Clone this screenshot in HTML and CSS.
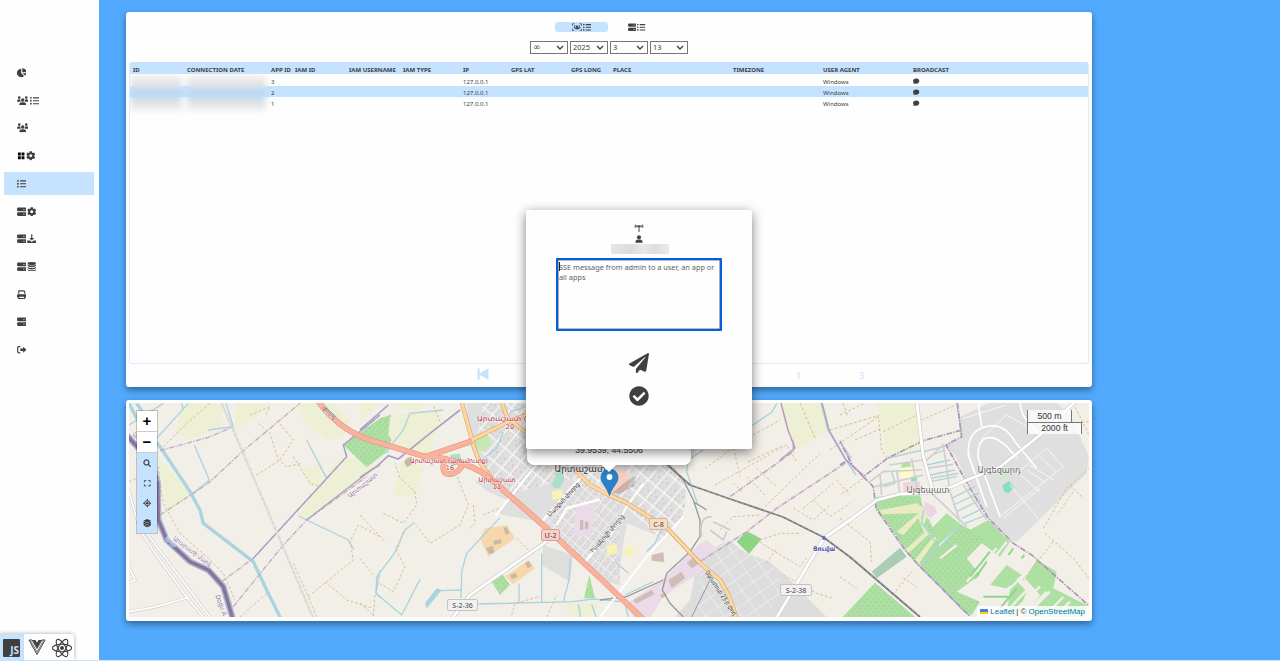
FILE: index.html
```html
<!DOCTYPE html>
<html lang="en">
<head>
<meta charset="utf-8">
<title>Admin</title>
<link rel="stylesheet" href="styles.css">
</head>
<body>
<svg class="defs" width="0" height="0">
  <symbol id="list" viewBox="0 0 512 512"><path d="M48 48a48 48 0 1 0 48 48 48 48 0 0 0-48-48zm0 160a48 48 0 1 0 48 48 48 48 0 0 0-48-48zm0 160a48 48 0 1 0 48 48 48 48 0 0 0-48-48zm448 16H176a16 16 0 0 0-16 16v32a16 16 0 0 0 16 16h320a16 16 0 0 0 16-16v-32a16 16 0 0 0-16-16zm0-320H176a16 16 0 0 0-16 16v32a16 16 0 0 0 16 16h320a16 16 0 0 0 16-16V80a16 16 0 0 0-16-16zm0 160H176a16 16 0 0 0-16 16v32a16 16 0 0 0 16 16h320a16 16 0 0 0 16-16v-32a16 16 0 0 0-16-16z"/></symbol>
  <symbol id="gear" viewBox="0 0 512 512"><path d="M487.4 315.7l-42.6-24.6c4.3-23.2 4.3-47 0-70.2l42.6-24.6c4.9-2.8 7.1-8.6 5.5-14-11.1-35.6-30-67.8-54.7-94.6-3.8-4.1-10-5.1-14.8-2.3L380.8 110c-17.9-15.4-38.5-27.3-60.8-35.1V25.8c0-5.6-3.9-10.5-9.4-11.7-36.7-8.2-74.3-7.8-109.2 0-5.5 1.2-9.4 6.1-9.4 11.7V75c-22.2 7.9-42.8 19.8-60.8 35.1L88.7 85.5c-4.9-2.8-11-1.9-14.8 2.3-24.7 26.7-43.6 58.9-54.7 94.6-1.7 5.4.6 11.2 5.5 14L67.3 221c-4.3 23.2-4.3 47 0 70.2l-42.6 24.6c-4.9 2.8-7.1 8.6-5.5 14 11.1 35.6 30 67.8 54.7 94.6 3.8 4.1 10 5.1 14.8 2.3l42.6-24.6c17.9 15.4 38.5 27.3 60.8 35.1v49.2c0 5.6 3.9 10.5 9.4 11.7 36.7 8.2 74.3 7.8 109.2 0 5.5-1.2 9.4-6.1 9.4-11.7v-49.2c22.2-7.9 42.8-19.8 60.8-35.1l42.6 24.6c4.9 2.8 11 1.9 14.8-2.3 24.7-26.7 43.6-58.9 54.7-94.6 1.5-5.5-.7-11.3-5.6-14.1zM256 336c-44.1 0-80-35.9-80-80s35.9-80 80-80 80 35.9 80 80-35.9 80-80 80z"/></symbol>
  <symbol id="server" viewBox="0 0 512 512"><path fill-rule="evenodd" d="M64 32h384a60 60 0 0 1 60 60v80a60 60 0 0 1-60 60H64A60 60 0 0 1 4 172V92a60 60 0 0 1 60-60zm270 78v44h36v-44zm72 0v44h36v-44zM64 280h384a60 60 0 0 1 60 60v80a60 60 0 0 1-60 60H64A60 60 0 0 1 4 420v-80a60 60 0 0 1 60-60zm270 78v44h36v-44zm72 0v44h36v-44z"/></symbol>
  <symbol id="pie" viewBox="0 0 512 512"><path d="M225 40v232l155 155A226 226 0 1 1 225 40zM282 8a226 226 0 0 1 222 222H282zM300 280h208a220 220 0 0 1-62 140z"/></symbol>
  <symbol id="users" viewBox="0 0 640 512"><circle cx="125" cy="80" r="72"/><circle cx="515" cy="80" r="72"/><circle cx="320" cy="210" r="98"/><path d="M0 290c0-75 45-115 110-115 35 0 62 10 82 26-10 50 8 88 35 112H20c-12 0-20-10-20-23zM640 290c0-75-45-115-110-115-35 0-62 10-82 26 10 50-8 88-35 112h207c12 0 20-10 20-23zM128 485c0-85 50-150 132-150h120c82 0 132 65 132 150 0 15-10 27-27 27H155c-17 0-27-12-27-27z"/></symbol>
  <symbol id="grid" viewBox="0 0 512 512"><path d="M50 80h155v160H50zM245 80h155v160H245zM50 280h155v160H50zM245 280h155v160H245z"/></symbol>
  <symbol id="download" viewBox="0 0 512 512"><path d="M224 20h64v190h100L256 350 124 210h100zM10 350h150l96 80 96-80h150v140H10z"/></symbol>
  <symbol id="db" viewBox="0 0 512 512"><ellipse cx="256" cy="85" rx="225" ry="80"/><path d="M31 130c80 75 370 75 450 0v75c-30 100-420 100-450 0zM31 265c80 75 370 75 450 0v60c-30 100-420 100-450 0zM31 385c80 75 370 75 450 0v45c-30 100-420 100-450 0z"/></symbol>
  <symbol id="print" viewBox="0 0 512 512"><path fill-rule="evenodd" d="M64 200V60q0-45 45-45h275l64 64v121h-60V105l-30-30H124v125zM55 225h402q55 0 55 55v130h-64v-70H64v70H0V280q0-55 55-55zM64 340h384v155H64zm60 30v65h264v-65z"/></symbol>
  <symbol id="exit" viewBox="0 0 512 512"><path d="M180 60v62H110q-42 0-42 42v184q0 42 42 42h70v62H100Q5 452 5 357V155q0-95 95-95zM330 100l180 156-180 156v-95H180V195h150z"/></symbol>
  <symbol id="bubble" viewBox="0 0 512 512"><path d="M256 32c142 0 252 90 252 205S398 445 256 445c-40 0-75-7-108-20C110 460 60 480 8 480c30-35 50-70 55-110C25 335 4 290 4 237 4 122 114 32 256 32z"/></symbol>
  <symbol id="person" viewBox="0 0 512 512"><circle cx="256" cy="140" r="130"/><path d="M20 500c0-130 70-210 170-210h132c100 0 170 80 170 210z"/></symbol>
  <symbol id="tower" viewBox="0 0 20 16"><path d="M2.500 1v7M6 2.500v4M17.500 1v7M14 2.500v4M3 4.500h14" fill="none" stroke="currentColor" stroke-width="1.700"/><circle cx="10" cy="4.500" r="2.200"/><path d="M9 4.500h2V16H9z"/></symbol>
  <symbol id="plane" viewBox="0 0 512 512"><path d="M476 3.200L12.500 270.600c-18.100 10.400-15.800 35.600 2.200 43.200L121 358.400l287.300-253.200c5.500-4.900 13.300 2.600 8.600 8.300L176 407v80.500c0 23.600 28.500 32.900 42.500 15.800L282 426l124.600 52.200c14.200 6 30.400-2.900 33-18.200l72-432C515 7.800 493.300-6.800 476 3.200z"/></symbol>
  <symbol id="check" viewBox="0 0 512 512"><path d="M504 256c0 136.967-111.033 248-248 248S8 392.967 8 256 119.033 8 256 8s248 111.033 248 248zM227.314 387.314l184-184c6.248-6.248 6.248-16.379 0-22.627l-22.627-22.627c-6.248-6.249-16.379-6.249-22.628 0L216 308.118l-70.059-70.059c-6.248-6.248-16.379-6.248-22.628 0l-22.627 22.627c-6.248 6.248-6.248 16.379 0 22.627l104 104c6.249 6.249 16.379 6.249 22.628.001z"/></symbol>
  <symbol id="scan" viewBox="0 0 20 16"><path d="M1 5V1h4M15 1h4v4M19 11v4h-4M5 15H1v-4" fill="none" stroke="currentColor" stroke-width="1.500"/><circle cx="10" cy="7" r="2.600"/><circle cx="5.300" cy="5.500" r="1.500"/><circle cx="14.700" cy="5.500" r="1.500"/><path d="M3 10q0-3 3-3l1 2.500h6l1-2.500q3 0 3 3h-2.500q.5 2-.5 2H7q-1 0-.5-2z"/></symbol>
  <symbol id="search" viewBox="0 0 16 16"><path d="M6.500 1.800a4.700 4.700 0 1 0 .01 0zM10 10l4.500 4.500" fill="none" stroke="currentColor" stroke-width="2.300"/></symbol>
  <symbol id="full" viewBox="0 0 16 16"><path d="M2.500 6V3h3.500M10 3h3.500v3M13.500 10v3H10M6 13H2.500v-3" fill="none" stroke="currentColor" stroke-width="1.700"/></symbol>
  <symbol id="target" viewBox="0 0 16 16"><circle cx="8" cy="8" r="4.900" fill="none" stroke="currentColor" stroke-width="1.700"/><circle cx="8" cy="8" r="2.500"/><path d="M7 0h2v4H7zM7 12h2v4H7zM0 7h4v2H0zM12 7h4v2h-4z"/></symbol>
  <symbol id="layers" viewBox="0 0 16 16"><path d="M8 0l7.500 3.500L8 7 .5 3.500zM.5 5.700L3 5.300l5 2.500 5-2.500 2.500.4v1.500L8 10.500.5 7.200zM.5 9L3 8.600l5 2.500 5-2.500 2.500.4v1.500L8 13.800.5 10.500zM.5 12l2-.3L8 14l5.500-2.300 2 .3L8 16z"/></symbol>
</svg>

<div class="page">
  <aside class="sidebar">
    <nav class="menu">
      <a class="item"><svg class="ic"><use href="#pie"/></svg></a>
      <a class="item"><svg class="ic wide"><use href="#users"/></svg><svg class="ic spaced"><use href="#list"/></svg></a>
      <a class="item"><svg class="ic wide"><use href="#users"/></svg></a>
      <a class="item"><svg class="ic black"><use href="#grid"/></svg><svg class="ic"><use href="#gear"/></svg></a>
      <a class="item active"><svg class="ic"><use href="#list"/></svg></a>
      <a class="item pair"><svg class="ic"><use href="#server"/></svg><svg class="ic"><use href="#gear"/></svg></a>
      <a class="item pair"><svg class="ic"><use href="#server"/></svg><svg class="ic"><use href="#download"/></svg></a>
      <a class="item pair"><svg class="ic"><use href="#server"/></svg><svg class="ic"><use href="#db"/></svg></a>
      <a class="item"><svg class="ic"><use href="#print"/></svg></a>
      <a class="item"><svg class="ic"><use href="#server"/></svg></a>
      <a class="item"><svg class="ic"><use href="#exit"/></svg></a>
    </nav>
    <div class="frameworks">
      <div class="fw on"><span class="js">JS</span></div>
      <div class="fw"><svg width="18" height="17" viewBox="0 0 18 17"><path d="M1 1l8 14.500L17 1h-3.200L9 9.500 4.200 1z" fill="none" stroke="#404040" stroke-width="1"/><path d="M4.500 1h3L9 3.800 10.500 1h3L9 9z" fill="#404040"/><path d="M2.500 1.500L9 13l6.500-11.500" fill="none" stroke="#404040" stroke-width=".7"/></svg></div>
      <div class="fw"><svg width="22" height="20" viewBox="-11 -10 22 20"><g fill="none" stroke="#404040" stroke-width="1.100"><ellipse rx="9.700" ry="3.700"/><ellipse rx="9.700" ry="3.700" transform="rotate(60)"/><ellipse rx="9.700" ry="3.700" transform="rotate(120)"/></g><circle r="2" fill="#404040"/></svg></div>
    </div>
  </aside>

  <main class="main">
    <section class="panel log">
      <div class="tabs">
        <div class="tab on"><svg class="ic scan"><use href="#scan"/></svg><svg class="ic"><use href="#list"/></svg></div>
        <div class="tab"><svg class="ic"><use href="#server"/></svg><svg class="ic"><use href="#list"/></svg></div>
      </div>
      <div class="filters">
        <div class="select"><span class="inf">∞</span><svg viewBox="0 0 8 5"><path d="M1 1l3 3 3-3"/></svg></div>
        <div class="select"><span>2025</span><svg viewBox="0 0 8 5"><path d="M1 1l3 3 3-3"/></svg></div>
        <div class="select"><span>3</span><svg viewBox="0 0 8 5"><path d="M1 1l3 3 3-3"/></svg></div>
        <div class="select"><span>13</span><svg viewBox="0 0 8 5"><path d="M1 1l3 3 3-3"/></svg></div>
      </div>
      <div class="table">
        <div class="row head"><span>ID</span><span>CONNECTION DATE</span><span>APP ID</span><span>IAM ID</span><span>IAM USERNAME</span><span>IAM TYPE</span><span>IP</span><span>GPS LAT</span><span>GPS LONG</span><span>PLACE</span><span>TIMEZONE</span><span>USER AGENT</span><span>BROADCAST</span></div>
        <div class="row"><span></span><span></span><span>3</span><span></span><span></span><span></span><span>127.0.0.1</span><span></span><span></span><span></span><span></span><span>Windows</span><span><svg class="chat"><use href="#bubble"/></svg></span></div>
        <div class="row sel"><span></span><span></span><span>2</span><span></span><span></span><span></span><span>127.0.0.1</span><span></span><span></span><span></span><span></span><span>Windows</span><span><svg class="chat"><use href="#bubble"/></svg></span></div>
        <div class="row"><span></span><span></span><span>1</span><span></span><span></span><span></span><span>127.0.0.1</span><span></span><span></span><span></span><span></span><span>Windows</span><span><svg class="chat"><use href="#bubble"/></svg></span></div>
        <div class="redacted"><i></i><i></i></div>
      </div>
      <div class="pager">
        <svg width="12" height="12" viewBox="0 0 12 12"><path d="M.5.500h2.200v4.700L11.500.3v11.400L2.700 6.800v4.700H.5z"/></svg>
        <span class="cur">1</span><span>3</span>
      </div>
    </section>

    <section class="panel geo">
      <div class="map">
        <svg class="tiles" viewBox="129 403 960 214" width="960" height="214">
          <defs>
            <pattern id="streets" width="36" height="20" patternUnits="userSpaceOnUse" patternTransform="rotate(-50)"><path d="M0 0H36M0 0V20" stroke="#f4f4f4" stroke-width="4"/><path d="M4 5h4v3H4zM14 4h3v4H14zM9 13h4v3H9zM22 12h3v3H22zM28 5h4v3H28z" fill="#c8bbb1"/></pattern>
            <pattern id="blocks" width="52" height="31" patternUnits="userSpaceOnUse" patternTransform="rotate(-50)"><path d="M0 0H52M0 0V31" stroke="#fbfbfb" stroke-width="6"/><path d="M8 8h5v3H8zM22 7h3v5H22zM36 9h5v3H36zM10 20h3v4H10zM26 20h6v3H26z" fill="#cbbdb2"/></pattern>
            <pattern id="trees" width="16" height="19" patternUnits="userSpaceOnUse"><path d="M3 3v5M11 12v5" stroke="#87c283" stroke-width="2"/></pattern>
            <pattern id="lots" width="44" height="36" patternUnits="userSpaceOnUse" patternTransform="rotate(-35)"><path d="M0 0H44M0 0V36" stroke="#f0f0f0" stroke-width="4"/></pattern>
          </defs>
          <rect x="129" y="403" width="960" height="214" fill="#f2efe9"/>

          <g transform="translate(120 360) scale(.33333)">
            <g fill="#eef0d5"><path d="M180 150L205 130H310L300 205 200 240 168 215zM350 130H450L400 180 345 200zM525 130H640L690 180 670 232 620 240 560 190zM113 290L215 400 190 430 140 450zM545 330L612 298 600 372 570 380zM650 300L690 290 780 320 560 480 535 465z"/></g>
            <path d="M670 255L780 175 810 165 840 190 795 280 740 322z" fill="#aedfa3"/><path d="M670 255L780 175 810 165 840 190 795 280 740 322z" fill="url(#trees)"/>
            <g fill="none" stroke="#aad3df" stroke-width="4"><path d="M110 235L205 130M265 210L340 200 318 130M223 255L268 360 215 403M560 240L620 355M535 468L685 540 702 570M780 630L768 700 780 712M185 130L190 150M27 195L130 130"/><path d="M50 130L70 160 60 200M27 130L50 175 120 260 210 395 240 450 250 490 400 605 440 690 482 775" stroke-width="10"/></g>
            <path d="M20 225L60 270 100 320 113 370 115 480 140 540 210 605 265 630 310 680 338 775" fill="none" stroke="#aab5cf" stroke-width="19"/>
            <path d="M20 225L60 270 100 320 113 370 115 480 140 540 210 605 265 630 310 680 338 775" fill="none" stroke="#85749b" stroke-width="10"/>
            <g fill="none" stroke="#c6abc6" stroke-width="4" stroke-dasharray="16 4 4 4"><path d="M120 272L265 232 340 200M120 465L215 403 265 370 370 272 540 130M305 665L400 595 680 290 670 255 740 200 780 165M340 740L490 555 560 480 740 350"/></g>
            <g fill="none" stroke="#a9a1c4" stroke-width="4"><path d="M400 595L680 290 670 255 780 165M560 480L760 325 780 315"/></g>
            <path d="M305 130L370 280 580 775" fill="none" stroke="#dbd9d7" stroke-width="7" stroke-dasharray="14 2"/>
            <g fill="none" stroke="#d9bd90" stroke-width="3" stroke-dasharray="8 6"><path d="M115 320L130 430 180 520 260 590 310 640 345 720M360 771L440 700M390 165L450 140 435 170M415 190L450 220 475 300 500 320 545 310M410 345L480 300 520 240 470 180M520 290L570 370 605 380M520 610L565 710 590 771M565 710L700 600 690 545 715 495 780 530M615 665L680 720 760 745M130 260L200 190 270 130M27 365L60 350 115 360"/></g>
            <g fill="none" stroke="#cfcfcf" stroke-width="9"><path d="M27 395L60 510 105 580 200 712 250 771M27 755L110 740 205 712M80 520L270 771M27 620L45 660 27 668"/></g><g fill="none" stroke="#fff" stroke-width="5"><path d="M27 395L60 510 105 580 200 712 250 771M27 755L110 740 205 712M80 520L270 771M27 620L45 660 27 668"/></g>
          </g>

          <g transform="translate(360 395) scale(.33333)">
            <g fill="#eef0d5"><path d="M0 24H60L35 50 0 80zM90 65L150 50 250 45 225 120 210 180 110 160 85 120zM85 20H210L180 45 140 45zM125 200L190 215 165 305 100 300zM620 625H710V666H625z"/></g>
            <path d="M320 24H780V570L735 560 700 530 640 470 540 380 430 360 408 350 440 315 385 290 345 260 375 245 345 160 320 90z" fill="#e0dfdf"/>
            <path d="M370 24H780V280L640 250 440 300 380 220 350 130z" fill="url(#blocks)"/>
            <path d="M640 250L780 280V560L700 530 560 385 600 330z" fill="url(#streets)"/>
            <path d="M550 450L640 480 630 560 545 510z" fill="#dededc"/>
            <path d="M340 130L385 120 395 150 370 170 335 160z" fill="#c8e6b2"/><path d="M270 180L300 175 305 200 275 215z" fill="#aee3c0"/><path d="M590 230q25-5 23 20l-10 25q-18 12-28-5z" fill="#aae0cb"/>
            <path d="M650 330L710 320 690 420 640 425z" fill="#ebdbe8"/><path d="M575 290l30-8 5 28-32 6zM740 450l25-8 8 35-30 5z" fill="#f7f2b5"/><path d="M660 375h10v30h-10zM675 380h10v22h-10z" fill="#cdbbb7"/>
            <path d="M360 430L375 400 440 390 465 430 385 485zM435 545L505 495 525 520 460 568z" fill="#f7d8ad"/>
            <path d="M395 560L425 535 450 570 420 600zM688 540L705 610H672z" fill="#aedfa3"/><path d="M395 560L425 535 450 570 420 600zM688 540L705 610H672z" fill="url(#trees)"/>
            <path d="M378 460l20-8 6 20-16 6zM400 438l22-6 3 12-22 6zM430 400l10-5 8 20-10 5zM450 540l18-6 5 12-18 7zM495 505l12-6 8 15-12 5zM140 190l15-5 5 20-18 12-10-15z" fill="#c9b8a6"/>
            <path d="M195 625L230 580 245 585 225 610 200 640z" fill="#aad3df"/>
            <g fill="none" stroke="#aad3df" stroke-width="4"><path d="M240 587L305 585M160 385L135 405 100 480 50 545 48 595 125 660 180 553M420 368L320 475 305 530 303 610M355 627L640 620 700 612 780 620M477 565V620M545 475V620M630 490L628 550 610 620M250 45L150 55 130 105 90 155 80 175M655 628L662 666M695 628L708 666M500 35L450 50M430 110L410 160 370 190M550 440L500 480"/></g>
            <g fill="none" stroke="#a9a1c4" stroke-width="5"><path d="M300 45L210 115 115 192 85 182 50 215 0 247M0 105L85 30"/></g>
            <g fill="none" stroke="#d9bd90" stroke-width="3" stroke-dasharray="8 6"><path d="M70 355L130 385 170 330 165 290 120 250 105 205M0 360L75 440M160 380L210 445 300 390 325 330 290 240M130 410L110 470 135 515 100 590 50 560M0 490L40 540M0 625L40 660M45 600L40 665M340 330L345 385 330 400M455 660L465 625 540 605M560 666L590 600M470 430L510 470M240 80L220 30M370 360L415 340"/></g>
            <path d="M275 672L330 600 545 450 575 425" fill="none" stroke="#ccc" stroke-width="12"/><path d="M275 672L330 600 545 450 575 425" fill="none" stroke="#fff" stroke-width="8"/>
            <path d="M545 380L665 245M675 500L780 375M408 360L600 120M590 390L620 340 750 305 780 310" fill="none" stroke="#fff" stroke-width="7"/>
          </g>

          <g transform="translate(600 440) scale(.33333)">
            <path d="M0 0H180L215 75 260 130 255 200 235 260 180 300 140 330 60 380 0 380z" fill="#e0dfdf"/><path d="M90 0H180L215 75 260 130 255 200 235 260 180 300 50 170z" fill="url(#blocks)"/><path d="M0 140L60 170 60 380 0 380z" fill="url(#streets)"/>
            <path d="M80 250L180 290 150 340 60 380z" fill="#f2efe9"/>
            <path d="M290 375L330 330 385 300 440 340 510 365 560 410 680 531H225L270 480z" fill="#dddddd"/><path d="M300 375L330 340 385 300 440 340 510 365 560 440 500 531H290z" fill="url(#lots)"/>
            <path d="M100 535L80 490 180 425 300 310 320 300 350 325 300 370 310 390 190 470 150 535z" fill="#ebdbe8"/>
            <path d="M205 420l40-25 10 20-40 30zM260 370l22-20 15 20-20 15zM100 480l55-30 8 12-55 30zM180 465l15-8 6 10-15 8zM155 345l35-8 3 30-38-5z" fill="#d0bdb5"/>
            <path d="M20 80L75 95 90 110 85 145 60 160 20 155z" fill="#f5cfc4"/><path d="M20 320l25-12 8 30-30 10zM70 330l20-15 20 20-25 18z" fill="#f7f2b5"/>
            <path d="M410 305L440 273 485 297 447 341z" fill="#8bd685"/><path d="M410 305L440 273 485 297 447 341z" fill="url(#trees)"/>
            <path d="M580 0L630 0 590 22z" fill="#eef0d5"/>
            <g fill="none" stroke="#aad3df" stroke-width="4"><path d="M310 30L265 60 260 95 292 190M185 265L165 310 140 335M45 365L85 400M75 465L160 425M75 490L85 531M720 0L745 50"/></g>
            <g fill="none" stroke="#c6abc6" stroke-width="5" stroke-dasharray="18 4 4 4"><path d="M390 170L580 35V0M300 365L440 275 530 205 750 60"/></g>
            <g fill="none" stroke="#d9bd90" stroke-width="3" stroke-dasharray="8 6"><path d="M315 85L365 50 400 20 420 110M345 135L560 15 590 65M400 130L430 160M440 110L500 170M470 85L530 140M495 200L660 40M610 205L700 130M580 205L640 240 690 195M640 180L690 230 750 190M710 120L750 165M360 270L400 230 480 225M480 300L540 280 600 280M445 280L500 320 600 380 620 355M500 370L530 325M550 405L650 460 700 475"/></g>
            <path d="M205 75L250 120 280 180 300 240 300 290 270 335 200 400 187 450 210 490 250 531M280 185L320 210M0 480L80 470 190 420" fill="none" stroke="#999" stroke-width="4"/>
            <path d="M330 420L275 531" stroke="#9993b5" stroke-width="3"/>
            <path d="M305 290q-10-60 30-60M330 270l40 30 10-25M340 245l50 25" fill="none" stroke="#ccc" stroke-width="5"/>
            <path d="M0 531L140 350 250 230M30 290L80 200 130 130" fill="none" stroke="#fff" stroke-width="6"/>
          </g>

          <path d="M782 403H825L830 430 798 449 783 420z" fill="#eef0d5"/>
          <path d="M738 435L750 427 772 412 777 403M821 403L828 430 846 460 856 475" fill="none" stroke="#aad3df" stroke-width="1.500"/>
          <path d="M781 403L788 430 795 448 780 460M822 403L829 430 846 460 863 475" fill="none" stroke="#b79cbc" stroke-width="1.500"/>
          <path d="M753 435L780 420M800 403L815 438M843 403L848 417M830 430L880 415M830 450L878 417M748 462L782 446M855 440L900 420" fill="none" stroke="#d9bd90" stroke-dasharray="3 2"/>

          <g transform="translate(840 395) scale(.33333)">
            <path d="M110 24H230L248 165 142 190z" fill="#eef0d5"/>
            <path d="M360 65L450 24H650L690 60 747 185 740 235 530 440 510 435 445 370 390 280 350 190 318 150 365 125z" fill="#dfdfdf"/>
            <g fill="#aedfa3"><path d="M110 305L240 300 250 345 290 420 300 460 235 515 195 465 150 395 108 340zM320 355L365 390 295 450 275 400zM445 375L510 440 480 485 380 410zM365 390L440 430 380 490 420 540 350 590 420 620 395 660 370 650 240 515 300 455zM500 510L545 540 500 580 450 570zM590 495L650 530 640 580 740 630 735 666H550L600 600 555 550zM105 563L225 666H8zM515 540L560 590 530 666H500z"/></g>
            <path d="M110 305L240 300 290 420 300 460 365 390 440 430 380 490 420 540 350 590 420 620 395 660 240 515 150 395zM105 563L225 666H8z" fill="url(#trees)"/>
            <path d="M95 530L180 458 200 485 110 550z" fill="#aacdb4"/>
            <path d="M120 345L230 325 270 350 250 390 275 420 255 420 235 370 190 420 170 410 235 355 125 358zM195 465L255 410 270 415 205 475zM220 500L280 425 290 430 235 510z" fill="#e8ebc4"/>
            <g stroke="#f2efe9" stroke-width="7"><path d="M300 490l50-40M380 560l90-100M400 590l55-80M430 530l70-90M490 600l60-60M500 650l70-75M520 650l80-75M550 660l70-70M580 640l50-50M610 666l60-60M650 660l40-40M450 630l50-40"/></g>
            <g stroke="#91d787" stroke-width="6"><path d="M450 470l-60 75M505 480l15-20M545 490l8-10M440 500l-35 50M430 605l75 0M480 640l50-60"/></g>
            <path d="M182 218h45v32h-45z" fill="#fffbc8"/><path d="M185 205l25-4 4 13-30 5z" fill="#aee3a0"/><path d="M213 245h18v14h-18z" fill="#80dcc0"/><path d="M190 262l50-2 3 35h-53zM255 320l30 15 5 20-20 15-20-25z" fill="#ebd5e0"/><path d="M487 270l20-12 16 20-18 17-12-5z" fill="#88dfc0"/><path d="M480 240h15v10h-15z" fill="#c6f3b5"/>
            <g fill="none" stroke="#aad3df" stroke-width="4"><path d="M350 24L365 120M142 190L248 165M275 180L315 165M260 210L330 195M270 240L345 225M270 260L350 245M335 310L405 275M340 330L415 295M350 350L420 315M365 370L430 340M375 385L440 360M250 345L245 385 265 410 295 455M365 390L240 515 390 664M155 230L165 265M130 275L165 265M0 140L35 190"/></g>
            <g fill="none" stroke="#cfcfcf" stroke-width="5"><path d="M148 210L250 195M90 260L130 230 245 225M120 235L125 300M170 225L180 300M105 275L250 240M215 190L235 300M250 205L310 150 330 290M260 220L340 208M270 250L355 235M250 170L330 150M270 290L380 395M330 290L360 380M370 270L440 375"/></g>
            <g fill="none" stroke="#f6f6f6" stroke-width="3"><path d="M385 165L390 190 440 335M370 70L500 30M425 130L500 60 590 110M480 365L670 215 620 160 530 235M490 370L600 280M530 230L600 290M560 225L620 265M570 210L640 255M600 185L650 235M510 270L595 370"/></g>
            <g fill="none" stroke="#fff" stroke-width="5"><path d="M415 24L425 95M440 335L385 180Q380 95 460 92Q500 95 525 140L590 220M480 365L415 190Q410 125 455 128Q490 135 530 190M520 190L600 120M540 24Q545 70 575 90L600 125"/></g>
            <g fill="none" stroke="#ac95b5" stroke-width="5" stroke-dasharray="18 4 4 4"><path d="M352 24L365 125 318 150 390 280 445 370 520 445 575 480 747 632M365 105L250 137 142 190 70 245 100 275 108 340 195 465 240 515 390 664M70 245L40 215 0 140M0 210L30 190"/></g>
            <g fill="none" stroke="#d9bd90" stroke-width="3" stroke-dasharray="8 6"><path d="M0 60L75 24M115 60L125 165 142 190M130 110L230 60M245 75L360 24M0 370L90 440 95 500M0 545L50 580M150 610L215 530M190 550L230 575M700 24L747 120M610 400L680 280 747 220M615 415L700 490 747 550M640 440L545 560M690 270L730 310M70 250L0 300M655 90L747 80M700 290L650 360"/></g>
          </g>

          <g fill="none" stroke-linejoin="round">
            <path d="M777 617L824 538 850 520 877 500 900 494 940 492 967 480 1000 467 1040 435 1076 401M917 403L923 455 932 488" stroke="#c8c8c8" stroke-width="4"/><path d="M777 617L824 538 850 520 877 500 900 494 940 492 967 480 1000 467 1040 435 1076 401M917 403L923 455 932 488" stroke="#fff" stroke-width="2.800"/>
            <path d="M654 453L670 467 690 485 733 500 783 517 823 537 850 557 920 617" stroke="#777" stroke-width="1.800"/><path d="M654 453L670 467 690 485 733 500 783 517 823 537 850 557 920 617" stroke="#aaa" stroke-width=".8" stroke-dasharray="3 3"/>
            <path d="M462 403L472 440Q478 465 492 478M472 440L510 421 540 410M502 403L507 417 525 432M575 470L590 485 609 495 625 502 667 528 700 563 720 580Q730 595 736 617" stroke="#d19c58" stroke-width="4.200"/><path d="M462 403L472 440Q478 465 492 478M472 440L510 421 540 410M502 403L507 417 525 432M575 470L590 485 609 495 625 502 667 528 700 563 720 580Q730 595 736 617" stroke="#fcd6a4" stroke-width="3.200"/>
            <path d="M318 401Q342 434 380 443L423 456Q470 460 492 480L543 525 600 578 644 620M428 456L472 441M445 458Q440 475 450 474T463 463" stroke="#e08f7c" stroke-width="5.800"/><path d="M318 401Q342 434 380 443L423 456Q470 460 492 480L543 525 600 578 644 620M428 456L472 441M445 458Q440 475 450 474T463 463" stroke="#f9b29c" stroke-width="4.800"/>
          </g>
          <circle cx="824" cy="538" r="2" fill="#6a6fb5"/>

          <g class="labels" text-anchor="middle">
            <g class="red"><text x="508" y="421" textLength="62" lengthAdjust="spacingAndGlyphs">Արտաշատ (հա</text><text x="510" y="429">20</text><text x="449" y="463" textLength="78" lengthAdjust="spacingAndGlyphs">Արտաշատ (արևմուտք)</text><text x="450" y="470">16</text><text x="497" y="482" textLength="37" lengthAdjust="spacingAndGlyphs">Արտաշատ</text><text x="497" y="489">11</text></g>
            <text class="town" x="580" y="472" textLength="51" lengthAdjust="spacingAndGlyphs">Արտաշատ</text>
            <text class="vill" x="928" y="493" textLength="43" lengthAdjust="spacingAndGlyphs">Այգեպատ</text><text class="vill" x="999" y="473" textLength="43" lengthAdjust="spacingAndGlyphs">Այգեզարդ</text>
            <text class="rail" x="824" y="551" textLength="22" lengthAdjust="spacingAndGlyphs">Յուվա</text>
            <text class="st" transform="translate(565 501) rotate(-47)" textLength="44" lengthAdjust="spacingAndGlyphs">Մարքսի փողոց</text><text class="st" transform="translate(609 535) rotate(-49)" textLength="48" lengthAdjust="spacingAndGlyphs">Իսակովի փողոց</text>
            <text class="st" transform="translate(719 594) rotate(57)" textLength="52" lengthAdjust="spacingAndGlyphs">Օգոստոսի 23-ի փող</text>
            <text class="st" transform="translate(328 414) rotate(42)" textLength="16" lengthAdjust="spacingAndGlyphs">փողոց</text>
            <text class="adm" transform="translate(364 487) rotate(-39)" textLength="36" lengthAdjust="spacingAndGlyphs">Արտաշատ</text>
            <text class="adm" transform="translate(191 553) rotate(37)" textLength="46" lengthAdjust="spacingAndGlyphs">Արարատի մարզ</text><text class="adm" transform="translate(219 606) rotate(70)" textLength="22" lengthAdjust="spacingAndGlyphs">Doğu A</text><text class="adm" transform="translate(136 439) rotate(50)" textLength="12" lengthAdjust="spacingAndGlyphs">Արա</text>
            <text class="water" transform="translate(170 543) rotate(40)" textLength="13" lengthAdjust="spacingAndGlyphs">Արաքս</text>
          </g>
          <g class="shields" text-anchor="middle"><rect x="541.500" y="529.500" width="18" height="11" rx="1.500" fill="#f7cfc5" stroke="#d7a197"/><text x="550.500" y="537.500">Մ-2</text><rect x="649.500" y="518.500" width="18" height="11" rx="1.500" fill="#f9dcc2" stroke="#d8b792"/><text x="658.500" y="527">C-8</text><rect x="447.500" y="599.500" width="30" height="11" rx="1.500" fill="#f1f1f1" stroke="#c4c4c4"/><text x="462.500" y="608">S-2-36</text><rect x="780.500" y="584.500" width="31" height="11" rx="1.500" fill="#f1f1f1" stroke="#c4c4c4"/><text x="796" y="593">S-2-38</text></g>
          <path d="M612 493l16-13 8-4-2 10-14 8z" fill="#000" opacity=".15"/>
          <path d="M609.500 495.500C607 487 601 483 601 477.500a8.500 8.500 0 0 1 17 0C618 483 612 487 609.500 495.500z" fill="#2a81cb" stroke="#2169a8" stroke-width=".8"/><circle cx="609.500" cy="477" r="2.900" fill="#fff"/>
        </svg>
        <div class="controls">
          <span class="zoom">+</span><span class="zoom">−</span>
          <span class="tool"><svg><use href="#search"/></svg></span><span class="tool"><svg><use href="#full"/></svg></span><span class="tool"><svg><use href="#target"/></svg></span><span class="tool"><svg><use href="#layers"/></svg></span>
        </div>
        <div class="popup">39.9539, 44.5506</div>
        <div class="scale"><span class="m">500 m</span><span class="ft">2000 ft</span></div>
        <div class="credit"><i class="flag"></i><a>Leaflet</a> | © <a>OpenStreetMap</a></div>
      </div>
    </section>
  </main>
</div>

<div class="dialog">
  <svg class="tower"><use href="#tower"/></svg>
  <svg class="who"><use href="#person"/></svg>
  <div class="name"></div>
  <div class="message"><i class="caret"></i>SSE message from admin to a user, an app or all apps</div>
  <svg class="action send"><use href="#plane"/></svg>
  <svg class="action"><use href="#check"/></svg>
</div>
</body>
</html>
```
FILE: styles.css
```css
* { box-sizing: border-box; }
body { margin: 0; background: #c5e2ff; color: #404040; font-family: "Noto Sans", sans-serif; overflow: hidden; }
svg { display: block; fill: currentColor; flex: none; }
.defs { position: absolute; }
.page { display: flex; height: 660px; background: #52aaff; }

.sidebar { width: 99px; flex: none; background: #fefefe; display: flex; flex-direction: column; justify-content: space-between; padding-top: 61px; }
.menu { display: flex; flex-direction: column; gap: 4px; padding: 0 5px 0 4px; }
.item { height: 23.7px; display: flex; align-items: center; padding: 0 0 0 12.6px; gap: .2px; }
.item.pair { gap: .5px; }
.item.active { background: #c5e2ff; }
.ic { width: 9.500px; height: 9.500px; }
.ic.wide { width: 11.500px; }
.ic.spaced { margin-left: 1.500px; }
.ic.black { color: #000; }
.frameworks { width: 74px; height: 26px; display: flex; border-radius: 0 3px 0 0; box-shadow: 0 0 4px rgba(0,0,0,.35); background: #fefefe; }
.fw { width: 25px; display: flex; align-items: center; justify-content: center; padding-top: 1px; }
.fw.on { background: #c5e2ff; width: 24px; padding: 1px 1px 0 0; }
.js { width: 17px; height: 18px; background: #404040; color: #c5e2ff; border-radius: 1px; font: bold 10px/23px "Noto Sans", sans-serif; text-align: right; padding-right: 1px; overflow: hidden; }

.main { padding: 12px 0 0 27px; display: flex; flex-direction: column; gap: 13px; }
.panel { width: 966px; background: #fefefe; border-radius: 3px; box-shadow: 0 3px 7px rgba(0,0,0,.42); }
.log { height: 375px; padding: 10px 3px 0; display: flex; flex-direction: column; }
.tabs { display: flex; gap: 1px; padding-left: 426px; }
.tab { width: 53px; height: 10px; border-radius: 3px; display: flex; align-items: center; justify-content: center; gap: 1px; }
.tab + .tab { margin-left: 1px; }
.tab.on { background: #c5e2ff; }
.tab .ic { width: 8.500px; height: 8.500px; }
.tab .ic.scan { width: 10px; }
.filters { display: flex; gap: 2px; padding: 9px 0 0 401px; }
.select { width: 38px; height: 13px; border: 1px solid #767676; display: flex; align-items: center; justify-content: space-between; padding: 0 3px 0 2px; font-size: 7.400px; line-height: 10px; }
.select span { margin-top: -1px; }
.select svg { width: 8px; height: 5px; fill: none; stroke: #404040; stroke-width: 1.300; }
.select .inf { font: 9px/8px "DejaVu Sans", sans-serif; }
.table { position: relative; height: 302px; margin-top: 8px; border: 1px solid #dcecfb; border-top: 0; border-radius: 3px; overflow: hidden; }
.row { display: grid; grid-template-columns: 53px 84px 24px 54px 54px 60px 48px 60px 42px 120px 90px 90px 1fr; height: 11.400px; font-size: 6px; line-height: 14px; white-space: nowrap; }
.row span { padding-left: 4px; }
.row span:first-child { padding-left: 3px; }
.head { background: #c5e2ff; font-weight: bold; height: 12px; line-height: 17.500px; margin-bottom: .6px; }
.sel { background: #c5e2ff; }
.chat { width: 6.500px; height: 6.500px; margin-top: 3px; }
.redacted { position: absolute; left: 0; top: 15px; width: 136px; height: 33px; display: flex; gap: 5px; filter: blur(3px); }
.redacted i { flex: 1 1 0; background: linear-gradient(#e6e6e6 0 28%, #bcd8f4 36% 62%, #e6e6e6 75%); }
.redacted i:first-child { flex: 0 0 52px; }
.pager { display: flex; align-items: center; height: 20px; padding-left: 348px; color: #c5e2ff; font-size: 9px; }
.pager span { padding-top: 2px; }
.pager .cur { margin-left: 307px; width: 63px; }

.geo { height: 221px; padding: 3px; }
.map { position: relative; height: 214px; overflow: hidden; }
.controls { position: absolute; left: 8px; top: 8px; width: 20px; display: flex; flex-direction: column; box-shadow: 0 0 0 1px rgba(0,0,0,.2); }
.controls span { height: 20px; display: flex; align-items: center; justify-content: center; }
.controls .zoom { height: 21px; background: #fff; color: #000; border-bottom: 1px solid #ccc; font: bold 15px/18px "Liberation Sans", sans-serif; }
.tool { background: #c5e2ff; padding-top: 1px; }
.tool svg { width: 8.500px; height: 8.500px; }
.popup { position: absolute; left: 398px; top: 20px; width: 164px; height: 42px; padding-top: 21px; background: #fff; border-radius: 7px; box-shadow: 0 2px 8px rgba(0,0,0,.4); text-align: center; color: #333; font: 8.700px/12px "Liberation Sans", sans-serif; }
.popup::after { content: ""; position: absolute; left: 74px; top: 41px; border: 8px solid transparent; border-top-color: #fff; border-bottom: 0; }
.scale { position: absolute; left: 898px; top: 7px; font: 8.700px/11px "Liberation Sans", sans-serif; text-align: center; color: #333; }
.scale span { display: block; background: rgba(255,255,255,.75); border: 1px solid #777; height: 12px; }
.scale .m { width: 45px; border-top: 0; height: 13px; line-height: 12px; }
.scale .ft { width: 55px; border-bottom: 0; margin-top: -1px; }
.credit { position: absolute; right: 0; bottom: 0; height: 11px; padding: 0 4px 0 3px; display: flex; gap: 2px; align-items: center; background: rgba(255,255,255,.8); color: #333; font: 8px/11px "Liberation Sans", sans-serif; white-space: nowrap; }
.credit a { color: #0078a8; }
.flag { width: 8px; height: 5px; background: linear-gradient(#4c7be1 50%, #ffd500 50%); }

.labels { font: 6.500px "DejaVu Sans", sans-serif; }
.labels text { paint-order: stroke; stroke: rgba(255,255,255,.65); stroke-width: 1px; }
.labels .red { fill: #b52e43; }
.town { fill: #333; font-size: 9.500px; }
.vill { fill: #666; font-size: 8px; }
.rail { fill: #4a50b0; font-size: 6.500px; font-weight: bold; }
.st { fill: #333; font-size: 6.500px; }
.adm { fill: #94759e; }
.water { fill: #659bc8; font-size: 5px; }
.shields { font: 7px "Noto Sans", "DejaVu Sans", sans-serif; fill: #444; }

.dialog { position: absolute; left: 526px; top: 210px; width: 226px; height: 239px; background: #fefefe; border-radius: 2px; box-shadow: 0 3px 12px rgba(0,0,0,.5); display: flex; flex-direction: column; align-items: center; padding-top: 14px; }
.tower { width: 10px; height: 8px; }
.who { width: 8px; height: 8px; margin-top: 3px; }
.name { width: 58px; height: 10px; margin: 1px 0 0 2px; background: linear-gradient(90deg, #e6e6e6, #dcdcdc 35%, #e8e8e8 55%, #dedede 75%, #ebebeb); }
.message { position: relative; width: 166px; height: 73px; margin-top: 4px; border: 2px solid #0060df; border-radius: 1px; box-shadow: inset 0 0 0 .6px #777; padding: 1.500px 1px; font-size: 7.350px; line-height: 10px; color: #5d5d6a; }
.caret { position: absolute; left: 1px; top: 2px; width: 1px; height: 9px; background: #222; }
.action { width: 20px; height: 20px; margin-top: 13px; }
.action.send { margin-top: 22px; }
```
